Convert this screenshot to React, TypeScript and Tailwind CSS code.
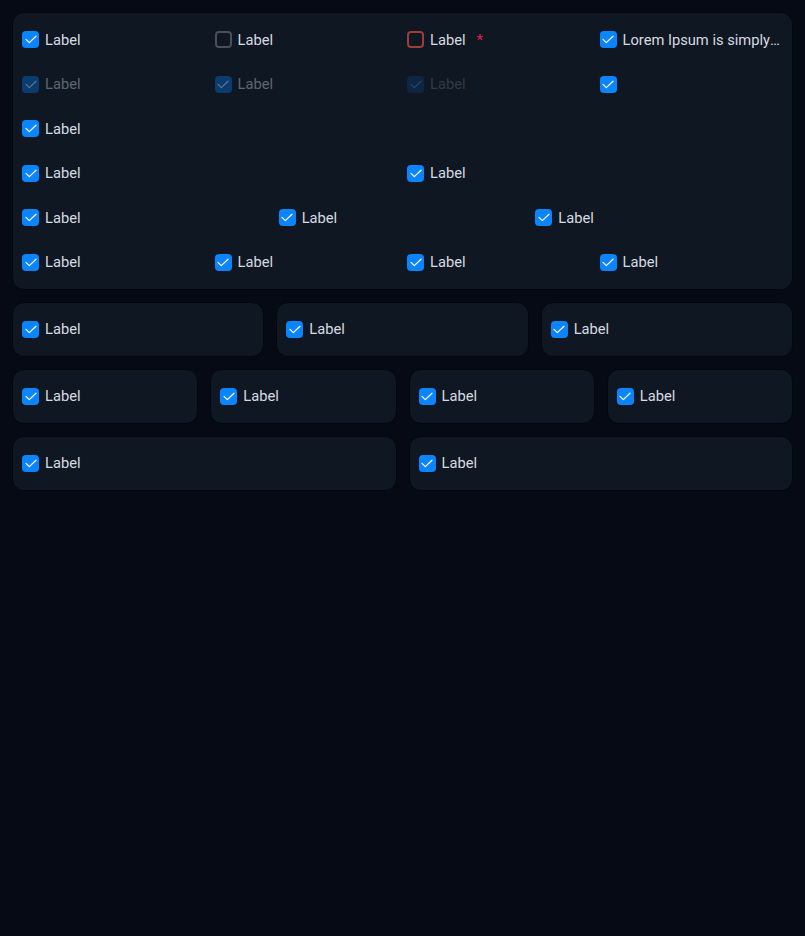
type Variant = "checked" | "unchecked" | "error" | "disabled" | "disabledFaint";

function Box({ variant }: { variant: Variant }) {
  if (variant === "unchecked" || variant === "error") {
    return (
      <span
        className={
          "w-[17px] h-[17px] shrink-0 rounded-[4px] border-2 " +
          (variant === "error" ? "border-[#9b3f38]" : "border-[#4a505a]")
        }
      />
    );
  }
  const bg =
    variant === "checked" ? "bg-[#0a84ff]" : variant === "disabled" ? "bg-[#0b3c6e]" : "bg-[#0c2643]";
  const stroke = variant === "checked" ? "#ffffff" : variant === "disabled" ? "#5b7896" : "#2c4561";
  return (
    <span className={"w-[17px] h-[17px] shrink-0 rounded-[4px] flex items-center justify-center " + bg}>
      <svg width="12" height="9" viewBox="0 0 12 9" fill="none">
        <path d="M1 4.4 L4.3 7.6 L11 1.2" stroke={stroke} strokeWidth="1.2" strokeLinecap="round" strokeLinejoin="round" />
      </svg>
    </span>
  );
}

function Check({
  label = "Label",
  variant = "checked",
  required,
}: {
  label?: string | null;
  variant?: Variant;
  required?: boolean;
}) {
  const text =
    variant === "disabled" ? "text-[#5f6670]" : variant === "disabledFaint" ? "text-[#323a45]" : "text-[#d7dbe0]";
  return (
    <div className="h-[35.5px] flex items-center gap-[6px] min-w-0">
      <Box variant={variant} />
      {label && <span className={"text-[14.7px] truncate " + text}>{label}</span>}
      {required && <span className="text-[15px] text-[#e0194f] ml-[5px]">*</span>}
    </div>
  );
}

function Card({ children }: { children: React.ReactNode }) {
  return (
    <div className="bg-[#0f1723] border border-[#03070d] rounded-xl px-[9px] py-[8.75px]">{children}</div>
  );
}

export default function App() {
  return (
    <div
      className="min-h-screen bg-[#050a15] p-3 flex flex-col gap-3"
      style={{ fontFamily: "Roboto, 'Noto Sans', sans-serif" }}
    >
      <div className="bg-[#0f1723] border border-[#03070d] rounded-xl p-[9px] flex flex-col gap-[9px]">
        <div className="grid grid-cols-4 gap-[9px]">
          <Check />
          <Check variant="unchecked" />
          <Check variant="error" required />
          <Check label="Lorem Ipsum is simply dummy text of the printing and typesetting industry." />
        </div>
        <div className="grid grid-cols-4 gap-[9px]">
          <Check variant="disabled" />
          <Check variant="disabled" />
          <Check variant="disabledFaint" />
          <Check label={null} />
        </div>
        <div className="grid grid-cols-1 gap-[9px]">
          <Check />
        </div>
        <div className="grid grid-cols-2 gap-[9px]">
          <Check />
          <Check />
        </div>
        <div className="grid grid-cols-3 gap-[9px]">
          <Check />
          <Check />
          <Check />
        </div>
        <div className="grid grid-cols-4 gap-[9px]">
          <Check />
          <Check />
          <Check />
          <Check />
        </div>
      </div>

      <div className="grid grid-cols-3 gap-3">
        <Card><Check /></Card>
        <Card><Check /></Card>
        <Card><Check /></Card>
      </div>
      <div className="grid grid-cols-4 gap-3">
        <Card><Check /></Card>
        <Card><Check /></Card>
        <Card><Check /></Card>
        <Card><Check /></Card>
      </div>
      <div className="grid grid-cols-2 gap-3">
        <Card><Check /></Card>
        <Card><Check /></Card>
      </div>
    </div>
  );
}
